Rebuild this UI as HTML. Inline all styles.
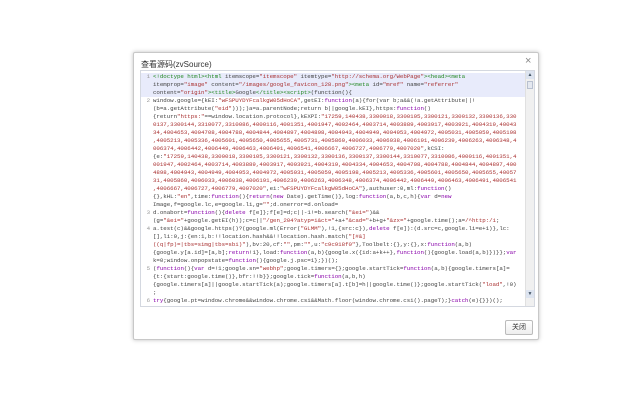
<!DOCTYPE html>
<html><head><meta charset="utf-8"><style>
body{margin:0;width:640px;height:400px;background:#fff;position:relative;overflow:hidden;font-family:"Liberation Sans","Noto Sans CJK SC",sans-serif}
.dlg{position:absolute;left:133px;top:52px;width:404px;height:286px;border:1px solid #c8c8c8;background:#fff;box-shadow:0 0 4px rgba(0,0,0,.25);border-radius:2px}
.title{position:absolute;left:7px;top:6px;font-size:8px;color:#333}
.x{position:absolute;left:391px;top:2px;font-size:11px;color:#888}
.code{position:absolute;left:6px;top:17px;width:393px;height:235px;border:1px solid #d4d8e0;overflow:hidden;background:#fff}
.rows{position:absolute;left:0;top:2px;width:385px}
.r{height:8px;line-height:8px;font-family:"Liberation Mono",monospace;font-size:5.8px;letter-spacing:-0.05px;white-space:pre;color:#444;position:relative;padding-left:12px}
.n{position:absolute;left:0;width:9px;text-align:right;color:#999}
.hl{background:#e8ebfb}
.s{color:#a33}.t{color:#282}.k{color:#80a}
.sb{position:absolute;right:0;top:0;width:8px;height:235px;background:#f0f0f0;border-left:1px solid #e0e0e0}
.sb .u,.sb .d{position:absolute;left:0;width:8px;height:8px;background:#dde4f0;font-size:5px;text-align:center;line-height:8px;color:#456}
.sb .u{top:0}.sb .d{bottom:8px}
.sb .th{position:absolute;left:1px;top:10px;width:6px;height:8px;background:#e4e8f0;border:1px solid #b8c0d0;box-sizing:border-box}
.btn{position:absolute;left:371px;top:267px;width:26px;height:13px;border:1px solid #bbb;border-radius:2px;background:linear-gradient(#fff,#eee);font-size:7px;text-align:center;line-height:13px;color:#333}
</style></head><body>
<div class="dlg">
<div class="title">查看源码(zvSource)</div>
<div class="x">×</div>
<div class="code"><div class="rows">
<div class="r hl"><span class="n">1</span><span class="t">&lt;!doctype html&gt;&lt;html</span> itemscope=<span class="s">"itemscope"</span> itemtype=<span class="s">"http://schema.org/WebPage"</span><span class="t">&gt;&lt;head&gt;&lt;meta</span></div>
<div class="r hl">itemprop=<span class="s">"image"</span> content=<span class="s">"/images/google_favicon_128.png"</span><span class="t">&gt;&lt;meta</span> id=<span class="s">"mref"</span> name=<span class="s">"referrer"</span></div>
<div class="r hl">content=<span class="s">"origin"</span><span class="t">&gt;&lt;title&gt;</span>Google<span class="t">&lt;/title&gt;&lt;script&gt;</span>(function(){</div>
<div class="r"><span class="n">2</span>window.google={kEI:<span class="s">"wFSPUYDYFcalkgW05dHoCA"</span>,getEI:<span class="k">function</span>(a){for(var b;a&amp;&amp;(!a.getAttribute||!</div>
<div class="r">(b=a.getAttribute(<span class="s">"eid"</span>)));)a=a.parentNode;return b||google.kEI},https:<span class="k">function</span>()</div>
<div class="r">{return<span class="s">"https:"</span>==window.location.protocol},kEXPI:<span class="s">"17259,140438,3300018,3300105,3300121,3300132,3300136,330</span></div>
<div class="r"><span class="s">0137,3300144,3310077,3310086,4000116,4001351,4001947,4002464,4003714,4003889,4003917,4003921,4004319,40043</span></div>
<div class="r"><span class="s">34,4004653,4004708,4004788,4004844,4004897,4004898,4004943,4004949,4004953,4004972,4005031,4005059,4005198</span></div>
<div class="r"><span class="s">,4005213,4005336,4005601,4005650,4005655,4005731,4005860,4006033,4006038,4006191,4006239,4006263,4006348,4</span></div>
<div class="r"><span class="s">006374,4006442,4006449,4006463,4006491,4006541,4006667,4006727,4006779,4007020"</span>,kCSI:</div>
<div class="r">{e:<span class="s">"17259,140438,3300018,3300105,3300121,3300132,3300136,3300137,3300144,3310077,3310086,4000116,4001351,4</span></div>
<div class="r"><span class="s">001947,4002464,4003714,4003889,4003917,4003921,4004319,4004334,4004653,4004708,4004788,4004844,4004897,400</span></div>
<div class="r"><span class="s">4898,4004943,4004949,4004953,4004972,4005031,4005059,4005198,4005213,4005336,4005601,4005650,4005655,40057</span></div>
<div class="r"><span class="s">31,4005860,4006033,4006038,4006191,4006239,4006263,4006348,4006374,4006442,4006449,4006463,4006491,4006541</span></div>
<div class="r"><span class="s">,4006667,4006727,4006779,4007020"</span>,ei:<span class="s">"wFSPUYDYFcalkgW05dHoCA"</span>},authuser:0,ml:<span class="k">function</span>()</div>
<div class="r">{},kHL:<span class="s">"en"</span>,time:<span class="k">function</span>(){<span class="k">return</span>(<span class="k">new</span> Date).getTime()},log:<span class="k">function</span>(a,b,c,h){<span class="k">var</span> d=<span class="k">new</span></div>
<div class="r">Image,f=google.lc,e=google.li,g=<span class="s">""</span>;d.onerror=d.onload=</div>
<div class="r"><span class="n">3</span>d.onabort=<span class="k">function</span>(){<span class="k">delete</span> f[e]};f[e]=d;c||-1!=b.search(<span class="s">"&amp;ei="</span>)&amp;&amp;</div>
<div class="r">(g=<span class="s">"&amp;ei="</span>+google.getEI(h));c=c||<span class="s">"/gen_204?atyp=i&amp;ct="</span>+a+<span class="s">"&amp;cad="</span>+b+g+<span class="s">"&amp;zx="</span>+google.time();a=<span class="s">/^http:/i</span>;</div>
<div class="r"><span class="n">4</span>a.test(c)&amp;&amp;google.https()?(google.ml(Error(<span class="s">"GLMM"</span>),!1,{src:c}),<span class="k">delete</span> f[e]):(d.src=c,google.li=e+1)},lc:</div>
<div class="r">[],li:0,j:{en:1,b:!!location.hash&amp;&amp;!!location.hash.match(<span class="s">"[#&amp;]</span></div>
<div class="r"><span class="s">((q|fp)=|tbs=simg|tbs=sbi)"</span>),bv:20,cf:<span class="s">""</span>,pm:<span class="s">""</span>,u:<span class="s">"c9c918f0"</span>},Toolbelt:{},y:{},x:<span class="k">function</span>(a,b)</div>
<div class="r">{google.y[a.id]=[a,b];<span class="k">return</span>!1},load:<span class="k">function</span>(a,b){google.x({id:a+k++},<span class="k">function</span>(){google.load(a,b)})}};<span class="k">var</span></div>
<div class="r">k=0;window.onpopstate=<span class="k">function</span>(){google.j.psc=1};})();</div>
<div class="r"><span class="n">5</span>(<span class="k">function</span>(){<span class="k">var</span> d=!1;google.sn=<span class="s">"webhp"</span>;google.timers={};google.startTick=<span class="k">function</span>(a,b){google.timers[a]=</div>
<div class="r">{t:{start:google.time()},bfr:!!b}};google.tick=<span class="k">function</span>(a,b,h)</div>
<div class="r">{google.timers[a]||google.startTick(a);google.timers[a].t[b]=h||google.time()};google.startTick(<span class="s">"load"</span>,!0)</div>
<div class="r">;</div>
<div class="r"><span class="n">6</span><span class="k">try</span>{google.pt=window.chrome&amp;&amp;window.chrome.csi&amp;&amp;Math.floor(window.chrome.csi().pageT);}<span class="k">catch</span>(e){}})();</div>
</div>
<div class="sb"><div class="u">▲</div><div class="th"></div><div class="d">▼</div></div>
</div>
<div class="btn">关闭</div>
</div>
</body></html>
